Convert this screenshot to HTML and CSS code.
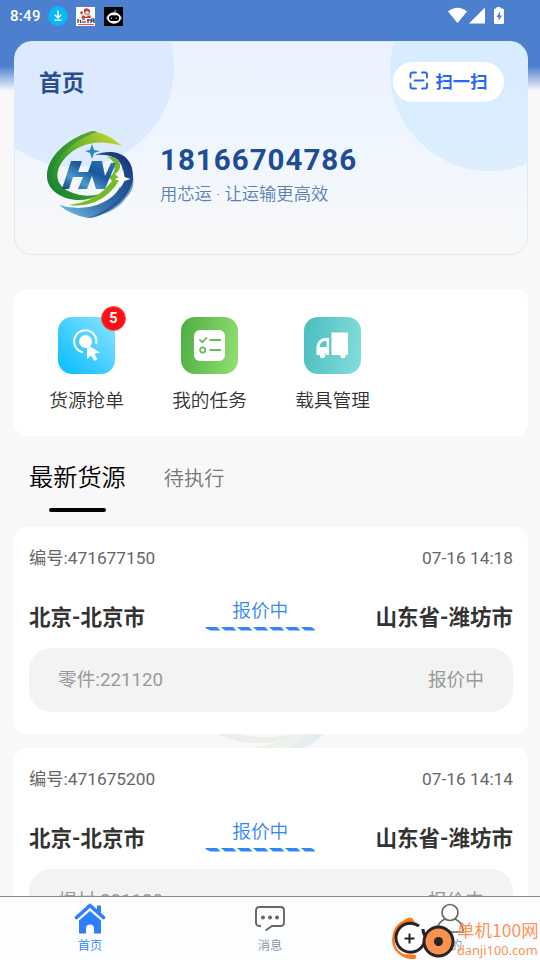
FILE: index.html
```html
<!DOCTYPE html>
<html lang="zh-CN">
<head>
<meta charset="utf-8">
<title>首页</title>
<link rel="stylesheet" href="styles.css">
</head>
<body>
<div class="app">
  <header class="status">
    <span class="clock">8:49</span>
    <svg class="s-dl" width="20" height="20" viewBox="0 0 20 20"><circle cx="10" cy="10" r="9.7" fill="#07b9fb"/><path d="M10 4.500v7M6.800 8.800l3.200 3.200 3.200-3.200M6.500 14.300h7" fill="none" stroke="#fff" stroke-width="1.500"/></svg>
    <svg class="s-app" width="19" height="19" viewBox="0 0 19 19"><path fill="#fff" d="M0 0h19v19H0z"/><path d="M8 2q3-2 6 1v2H8zM5 4l2 1-1 3-2-2z" fill="#e33"/><circle cx="11" cy="5.700" r="2.300" fill="#f6d5c4" stroke="#333" stroke-width=".6"/><path d="M7 8l3 2 4-2 1 3H5z" fill="#d9292b"/><path d="M2 12v4M4 13l1 3M6 12h3M6 15h4M12 12v4M11 13h3M15 12h3v4M15 12v4M15 14h3" stroke="#222" stroke-width="1.100" fill="none"/><path d="M2 17.600h16" stroke="#e44" stroke-width="1"/></svg>
    <svg class="s-app" width="19" height="19" viewBox="0 0 19 19"><path d="M0 0h19v19H0z"/><path d="M10 6l2-3" stroke="#2684e8" stroke-width="1.500"/><ellipse cx="10" cy="11" rx="8" ry="4" fill="#338cdb"/><ellipse cx="10" cy="11" rx="6.800" ry="5.700" fill="#fff"/><rect x="5" y="8.300" width="10" height="5.800" rx="2.800"/><path d="M7.500 10.500v1.500M12.300 10.500v1.500" stroke="#bbb"/></svg>
    <svg class="s-right" width="58" height="18" viewBox="0 0 58 18"><path d="M0 4.500Q9.500-3 19 4.500L9.500 16z" fill="#fff"/><path d="M37 .5V16.500H21z" fill="#fff"/><path d="M48 1.500Q48 0 49.500 0h2Q53 0 53 1.500h1.500Q56 1.500 56 3v12.500Q56 17 54.500 17h-7Q46 17 46 15.500V3Q46 1.500 47.500 1.500z" fill="#fff"/><path d="M52 4.500L48.500 10h2v4l3.500-5.500h-2z" fill="#4c80cf"/></svg>
  </header>

  <main>
    <section class="hero">
      <div class="hero-top">
        <h1>首页</h1>
        <button class="scan"><svg width="20" height="20" viewBox="0 0 20 20" fill="none" stroke="#2468f8" stroke-width="1.900" stroke-linecap="round"><path d="M1.500 6.500V3.500Q1.500 1.500 3.500 1.500H7M13 1.500h3q2 0 2 2v3M1.500 12.500v3q0 2 2 2H7M13 17.500h3q2 0 2-2v-3M5.500 9.500h9"/></svg><span>扫一扫</span></button>
      </div>
      <div class="profile">
        <svg class="logo" width="88" height="88" viewBox="0 0 88 88">
          <defs>
            <linearGradient id="lg" x1="0" y1="1" x2="1" y2="0"><stop stop-color="#087b36"/><stop offset=".45" stop-color="#47a52c"/><stop offset="1" stop-color="#d8dc31"/></linearGradient>
            <linearGradient id="lb" x1="0" y1="1" x2="1" y2="0"><stop stop-color="#7ec8e8"/><stop offset=".35" stop-color="#3978b5"/><stop offset="1" stop-color="#122c75"/></linearGradient>
            <linearGradient id="ll" x1="0" y1="1" x2="1" y2="0"><stop stop-color="#163f80"/><stop offset=".3" stop-color="#4a9acd"/><stop offset=".6" stop-color="#19569c"/><stop offset="1" stop-color="#2d7dba"/></linearGradient>
          </defs>
          <path d="M76 16Q62 4 51 2Q47 0 43 2C22 9 1 26 1 46C1 60 16 70 33 70Q45 70 54 64Q40 68 27 63C7 56 8 40 20 27C32 14 52 8 76 16z" fill="url(#lg)"/>
          <path d="M51 2Q47 0 43 2C22 9 1 26 1 46Q1 56 10 63C2 50 6 37 14 27Q26 11 51 2z" fill="#16803a" opacity=".45"/>
          <path d="M49 25C65 18 87 22 87 46C87 61 74 76 56 84Q50 88 42 88Q25 85 13 75Q33 81 51 75C68 69 77 58 77 44Q77 23 49 25z" fill="url(#lb)"/>
          <path d="M42 88Q59 82 72 70Q85 58 86 42Q91 57 80 68Q70 83 42 88z" fill="#164c91" opacity=".55"/>
          <path d="M23 75Q44 73 58 60L66 51L63 47Q70 43 68 35Q67 29 61 27Q71 25 74 34Q75 40 69 44L74 49Q64 66 49 72Q35 77 23 75z" fill="#78b928"/>
          <path d="M25 31h11l-4 11h10l4-11h10l3 15 6-13h5l-11 26h-9l-4-13-5 13H32l5-12H27l-4 12H16z" fill="url(#ll)"/>
          <path d="M46 14l2 6 6 1-6 2-2 6-2-6-5-2 5-1z" fill="#2c86be"/>
          <path d="M77 39l1.500 8 6 2-6 2-4 7-1-7-5-2 6-2z" fill="#fff"/>
        </svg>
        <div class="who"><strong>18166704786</strong><p>用芯运 · 让运输更高效</p></div>
      </div>
    </section>

    <nav class="shortcuts">
      <a class="shortcut"><span class="tile blue"><svg width="57" height="57" viewBox="0 0 57 57"><circle cx="27.500" cy="24.500" r="6.500" fill="#fff"/><path d="M25 35.400A11.200 11.200 0 1 1 38.200 27" fill="none" stroke="#fff" stroke-width="2"/><path d="M29 27.500l13 8-5.500 1.300 2.800 5.500-3 1.800-3-5.600-4.300 3.500z" fill="#fff"/></svg><b class="badge">5</b></span><span>货源抢单</span></a>
      <a class="shortcut"><span class="tile green"><svg width="57" height="57" viewBox="0 0 57 57"><rect x="13" y="13" width="31" height="31" rx="6" fill="#fff"/><g fill="none" stroke="#67be54" stroke-width="1.800"><path d="M18.500 22.500l2.800 2.800 4.700-5M28.500 23H40M28.500 33H40"/><circle cx="21.700" cy="33" r="2.600"/></g></svg></span><span>我的任务</span></a>
      <a class="shortcut"><span class="tile teal"><svg width="57" height="57" viewBox="0 0 57 57"><path d="M27.500 15.500h15.500q1 0 1 1V37q0 1-1 1h-1.200a3.400 3.400 0 0 0-6 0h-7.300q-1 0-1-1zM25 21v17h-2.600a4 4 0 0 0-7 0H12.500V31q0-5 4-8.500 2-1.500 4-1.500z" fill="#fff"/><path d="M22.500 24v6h-7q0-3 2.500-5 1.500-1 4.500-1z" fill="#58c5c3"/><circle cx="18.500" cy="38.500" r="2.700" fill="#fff"/><circle cx="39" cy="38.500" r="2.700" fill="#fff"/></svg></span><span>载具管理</span></a>
    </nav>

    <div class="tabs"><span class="tab active">最新货源</span><span class="tab">待执行</span></div>

    <section class="orders">
      <article class="order">
        <div class="meta"><span>编号:471677150</span><time>07-16 14:18</time></div>
        <div class="route"><b>北京-北京市</b><span class="state">报价中<svg width="111" height="4" viewBox="0 0 111 4"><path d="M0 0H12L15.500 3.500H5.500Q2 3 0 0zM16 0H28L31.500 3.500H20zM32 0H44L47.500 3.500H36zM48 0H60L63.500 3.500H52zM64 0H76L79.500 3.500H68zM80 0H92L95.500 3.500H84zM96 0H106Q109 .5 110.500 3.500H100z" fill="#2f86f6"/></svg></span><b>山东省-潍坊市</b></div>
        <div class="goods"><span>零件:221120</span><span>报价中</span></div>
      </article>
      <svg class="watermark" width="514" height="14" viewBox="0 0 514 14"><path d="M204 0Q222 10 250 9Q274 8 295 0H283Q250 6 223 0z" fill="#eaf0e9"/><path d="M235 14Q265 11 282 0H295Q281 11 265 14z" fill="#ecf2eb"/><path d="M270 14Q286 8 294 0H309Q302 9 290 14z" fill="#e8edf2"/></svg>
      <article class="order">
        <div class="meta"><span>编号:471675200</span><time>07-16 14:14</time></div>
        <div class="route"><b>北京-北京市</b><span class="state">报价中<svg width="111" height="4" viewBox="0 0 111 4"><path d="M0 0H12L15.500 3.500H5.500Q2 3 0 0zM16 0H28L31.500 3.500H20zM32 0H44L47.500 3.500H36zM48 0H60L63.500 3.500H52zM64 0H76L79.500 3.500H68zM80 0H92L95.500 3.500H84zM96 0H106Q109 .5 110.500 3.500H100z" fill="#2f86f6"/></svg></span><b>山东省-潍坊市</b></div>
        <div class="goods"><span>焊材:221120</span><span>报价中</span></div>
      </article>
    </section>
  </main>

  <footer class="bottom">
    <a class="item on"><svg width="32" height="32" viewBox="0 0 32 32"><path d="M2.500 14.500L16 2.500l13.500 12" fill="none" stroke="#2f7ffc" stroke-width="3.600" stroke-linecap="round" stroke-linejoin="round"/><path d="M23 2.500h4v9l-4-3.500z" fill="#2f7ffc"/><path d="M5 17.500L16 8l11 9.500V30.500h-7V25q0-3.500-4-3.500T12 25v5.500H5z" fill="#2f7ffc"/></svg><span>首页</span></a>
    <a class="item"><svg width="32" height="32" viewBox="0 0 32 32"><path d="M7 23H5.500Q2 23 2 19.500V7.500Q2 4 5.500 4h21Q30 4 30 7.500v12Q30 23 26.500 23H18l-6.500 4.500" fill="none" stroke="#666" stroke-width="1.900"/><g fill="#666"><circle cx="9" cy="14.500" r="2"/><circle cx="16" cy="14.500" r="2"/><circle cx="23" cy="14.500" r="2"/></g></svg><span>消息</span></a>
    <a class="item"><svg width="32" height="32" viewBox="0 0 32 32" fill="none" stroke="#686868" stroke-width="1.700"><circle cx="16" cy="9.500" r="8"/><path d="M3 29V27Q4 19 11 16M21 16q7 3 8 11v2H3"/></svg><span>我的</span></a>
  </footer>

  <div class="mark">
    <svg width="66" height="44" viewBox="0 0 66 44"><path d="M22 3Q9 3 4 14Q-2 31 13 39Q19 42 25 40" fill="none" stroke="#fa791c" stroke-width="2.500"/><path d="M11 7Q15-1 21 1L24 5zM12 37q7 6 14 1z" fill="#fa791c"/><path d="M28 9A14.500 14.500 0 1 0 33 26" fill="#fff" stroke="#292326" stroke-width="3"/><path d="M18.500 16.500v10M13.500 21.500h10" stroke="#292326" stroke-width="2"/><circle cx="47.500" cy="24.500" r="14.500" fill="#fb914f" stroke="#292326" stroke-width="3"/><path d="M32 12q0 5 3 8" fill="none" stroke="#292326" stroke-width="3"/><circle cx="47.500" cy="24.500" r="4.500" fill="#292326"/></svg>
    <div class="mark-text"><span>单机100网</span><small>danji100.com</small></div>
  </div>
</div>
</body>
</html>
```
FILE: styles.css
```css
* { box-sizing: border-box; }
body { margin: 0; font-family: Roboto, "Noto Sans CJK SC", sans-serif; }
.app { position: relative; width: 540px; height: 960px; overflow: hidden; display: flex; flex-direction: column; background: linear-gradient(#4c80cf 0 66px, #f8f8f8 91px); }
.status { flex: none; height: 41px; display: flex; align-items: center; padding: 0 34px 9px 10px; color: #fff; }
.clock { width: 38px; font-size: 15px; font-weight: 500; letter-spacing: .3px; }
.s-app { margin-left: 8px; }
.s-app + .s-app { margin-left: 9px; }
.s-right { margin-left: auto; }
main { flex: 1; min-height: 0; overflow: hidden; padding: 0 12px 0 14px; }
.hero { height: 214px; border: 1px solid #dceafa; border-radius: 18px; padding: 20px 23px 0 24px; background: radial-gradient(circle at 59px 25px, rgba(199,221,255,.45) 0 99.500px, transparent 100.500px), radial-gradient(circle at 475px 29px, rgba(199,230,255,.5) 0 99.500px, transparent 100.500px), linear-gradient(#ebf1ff, #eff6ff 45%, #f8f8f8 95%); }
.hero-top { display: flex; justify-content: space-between; align-items: center; height: 40px; }
h1 { margin: 3px 0 0; font-size: 22.700px; line-height: 30px; font-weight: 700; color: #2b4d8d; }
.scan { width: 111px; height: 40px; border: 0; border-radius: 20px; background: #fff; display: flex; align-items: center; justify-content: center; gap: 7px; padding: 0; color: #2468f8; font: 700 17.300px/24px Roboto, "Noto Sans CJK SC", sans-serif; }
.scan svg { margin: -2px 0 0 -1px; }
.profile { display: flex; margin: 28px 0 0 7px; gap: 26px; }
.who strong { display: block; margin-top: 12px; font-size: 29.500px; line-height: 36px; letter-spacing: 1px; color: #1f4d94; }
.who p { margin: 4px 0 0; font-size: 17.300px; line-height: 24px; font-weight: 350; color: #5b7fb7; }
.shortcuts { display: flex; margin-top: 34px; height: 147px; border-radius: 12px; background: #fff; padding: 28px 0 0 11px; }
.shortcut { width: 123px; display: flex; flex-direction: column; align-items: center; gap: 13px; font-size: 18.700px; line-height: 28px; font-weight: 350; color: #333; }
.tile { position: relative; width: 57px; height: 57px; border-radius: 14px; }
.tile svg { display: block; }
.blue { background: linear-gradient(45deg, #18c1ff 15%, #8de5ff); }
.green { background: linear-gradient(100deg, #4dad43, #92e071); }
.teal { background: linear-gradient(100deg, #49bdbd, #85dedb); }
.badge { position: absolute; left: 43px; top: -11px; width: 25px; height: 25px; border: 1px solid #f05a42; border-radius: 50%; background: #ff0f17; color: #fff; font-size: 14.500px; line-height: 23px; text-align: center; }
.tabs { display: flex; height: 91px; padding: 25px 0 0 15px; gap: 38px; font-weight: 350; }
.tab { font-size: 20.200px; line-height: 36px; color: #777; }
.tab.active { font-size: 24.200px; color: #000; display: flex; flex-direction: column; align-items: center; line-height: 35px; }
.tab.active::after { content: ""; width: 57px; height: 4px; margin-top: 12px; border-radius: 2px; background: #000; }
.watermark { display: block; }
.order { height: 207px; border-radius: 12px; background: #fff; padding: 19px 15px 0; }
.meta, .route, .goods { display: flex; justify-content: space-between; }
.meta { font-size: 17.300px; line-height: 24px; color: #666; }
.route { margin-top: 24px; height: 54px; align-items: flex-start; font-size: 21.500px; line-height: 48px; color: #333; }
.state { display: flex; flex-direction: column; align-items: center; font-size: 18.700px; line-height: 28px; font-weight: 350; color: #2f86f6; margin-top: 3px; }
.state svg { margin-top: 2px; }
.goods { height: 64px; border-radius: 22px; padding: 0 29px; background: #f3f3f3; color: #999; font-size: 18.700px; line-height: 64px; }
.bottom { flex: none; height: 64px; border-top: 1px solid #8c8c8c; background: #fcfdff; display: flex; }
.item { flex: 1; display: flex; flex-direction: column; align-items: center; padding-top: 6px; font-size: 12.300px; line-height: 18px; font-weight: 350; color: #8790a6; }
.item span { margin-top: 2px; }
.on { color: #2f7ffc; }
.mark { position: absolute; left: 391px; top: 917px; display: flex; }
.mark-text { display: flex; flex-direction: column; color: #ff9353; font: 17.500px/26px "Noto Sans CJK SC", sans-serif; white-space: nowrap; }
.mark-text small { font: 12.800px/14px "Noto Sans", sans-serif; }
```
